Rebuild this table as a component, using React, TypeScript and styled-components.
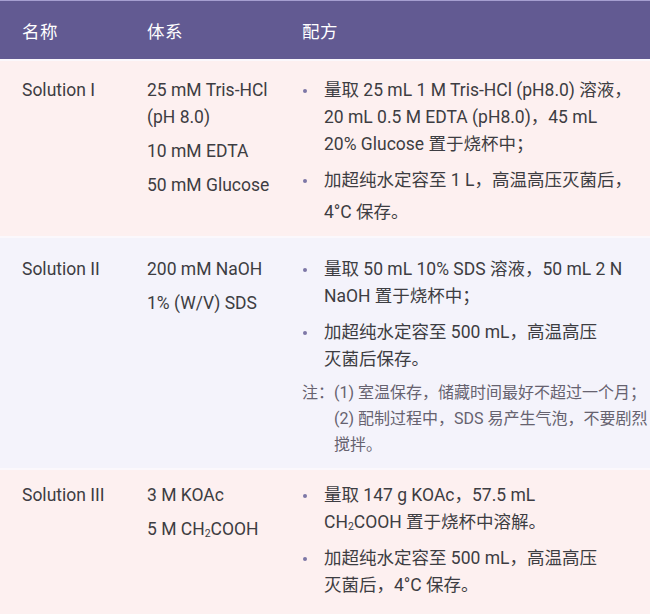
import * as React from 'react';
import styled, { createGlobalStyle } from 'styled-components';

const GlobalStyle = createGlobalStyle`
  html, body {
    margin: 0;
    padding: 0;
    background: #fdf0f0;
  }
  body {
    font-family: Roboto, "Noto Sans CJK SC", sans-serif;
    color: #3d3d42;
  }
`;

const Table = styled.div`
  width: 650px;
  height: 614px;
  overflow: hidden;
  background: #fdf0f0;
`;

const Grid = styled.div`
  display: grid;
  grid-template-columns: 125px 155px 1fr;
  padding-left: 22px;
  padding-right: 6px;
`;

const Header = styled(Grid)`
  height: 59px;
  box-sizing: border-box;
  padding-top: 1px;
  align-items: center;
  background: #625a92;
  border-top: 1px solid #a59ed0;
  color: #ffffff;
  font-size: 17.5px;
  letter-spacing: 0.5px;
`;

const Row = styled(Grid)<{ $tone: 'pink' | 'blue'; $top: number; $bottom: number }>`
  background: ${(p) => (p.$tone === 'pink' ? '#fdf0f0' : '#f4f3fb')};
  border-top: 2px solid #fbf8fc;
  padding-top: ${(p) => p.$top}px;
  padding-bottom: ${(p) => p.$bottom}px;
  font-size: 17.5px;
  line-height: 27px;
  align-items: start;
`;

const Name = styled.div``;

const Items = styled.div`
  display: flex;
  flex-direction: column;
  gap: 7px;
`;

const Steps = styled.ul`
  list-style: none;
  margin: 0;
  padding: 0;
  display: flex;
  flex-direction: column;
  gap: 9px;
`;

const Step = styled.li`
  position: relative;
  padding-left: 22px;
  white-space: nowrap;

  &::before {
    content: '';
    position: absolute;
    left: 1px;
    top: 12px;
    width: 4px;
    height: 4px;
    border-radius: 50%;
    background: #7d77a6;
  }
`;

const Tail = styled.span`
  display: block;
  margin-top: 5px;
`;

const Note = styled.div`
  display: flex;
  margin-top: 7px;
  font-size: 16px;
  line-height: 26px;
  color: #66626f;
  white-space: nowrap;
`;

const NoteLabel = styled.span`
  width: 32px;
  flex: none;
`;

const Sub = styled.sub`
  font-size: 0.6em;
  vertical-align: -0.15em;
  line-height: 0;
`;

export default function App(): JSX.Element {
  return (
    <>
      <GlobalStyle />
      <Table>
        <Header>
          <span>名称</span>
          <span>体系</span>
          <span>配方</span>
        </Header>

        <Row $tone="pink" $top={16} $bottom={10}>
          <Name>Solution I</Name>
          <Items>
            <span>
              25 mM Tris-HCl
              <br />
              (pH 8.0)
            </span>
            <span>10 mM EDTA</span>
            <span>50 mM Glucose</span>
          </Items>
          <Steps>
            <Step>
              量取 25 mL 1 M Tris-HCl (pH8.0) 溶液，
              <br />
              20 mL 0.5 M EDTA (pH8.0)，45 mL
              <br />
              20% Glucose 置于烧杯中；
            </Step>
            <Step>
              加超纯水定容至 1 L，高温高压灭菌后，
              <Tail>4°C 保存。</Tail>
            </Step>
          </Steps>
        </Row>

        <Row $tone="blue" $top={18} $bottom={10}>
          <Name>Solution II</Name>
          <Items>
            <span>200 mM NaOH</span>
            <span>1% (W/V) SDS</span>
          </Items>
          <div>
            <Steps>
              <Step>
                量取 50 mL 10% SDS 溶液，50 mL 2 N
                <br />
                NaOH 置于烧杯中；
              </Step>
              <Step>
                加超纯水定容至 500 mL，高温高压
                <br />
                灭菌后保存。
              </Step>
            </Steps>
            <Note>
              <NoteLabel>注：</NoteLabel>
              <span>
                (1) 室温保存，储藏时间最好不超过一个月；
                <br />
                (2) 配制过程中，SDS 易产生气泡，不要剧烈
                <br />
                搅拌。
              </span>
            </Note>
          </div>
        </Row>

        <Row $tone="pink" $top={12} $bottom={20}>
          <Name>Solution III</Name>
          <Items>
            <span>3 M KOAc</span>
            <span>
              5 M CH<Sub>2</Sub>COOH
            </span>
          </Items>
          <Steps>
            <Step>
              量取 147 g KOAc，57.5 mL
              <br />
              CH<Sub>2</Sub>COOH 置于烧杯中溶解。
            </Step>
            <Step>
              加超纯水定容至 500 mL，高温高压
              <br />
              灭菌后，4°C 保存。
            </Step>
          </Steps>
        </Row>
      </Table>
    </>
  );
}
